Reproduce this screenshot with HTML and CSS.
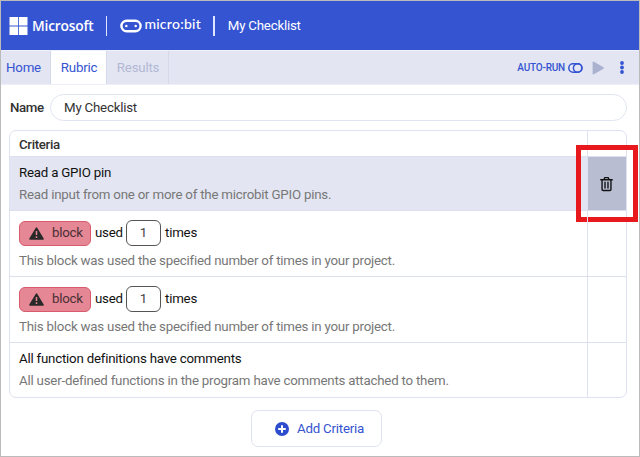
FILE: index.html
```html
<!DOCTYPE html>
<html lang="en">
<head>
<meta charset="utf-8">
<title>My Checklist</title>
<link rel="stylesheet" href="styles.css">
</head>
<body>
<div class="app">
  <header class="header">
    <svg class="windows" viewBox="0 0 18 18"><path fill="#fff" d="M0 0h8.6v8.5H0zM9.4 0H18v8.5H9.4zM0 9.4h8.6V18H0zM9.4 9.4H18V18H9.4z"/></svg>
    <span class="ms">Microsoft</span>
    <i class="bar"></i>
    <svg class="face" viewBox="0 0 22 14"><rect x="1.4" y="1.7" width="19.2" height="10.6" rx="5.3" fill="none" stroke="#fff" stroke-width="2.4"/><circle cx="6.3" cy="7" r="1.25" fill="#fff"/><circle cx="15.7" cy="7" r="1.25" fill="#fff"/></svg>
    <span class="mb">micro:bit</span>
    <i class="bar bar2"></i>
    <span class="title">My Checklist</span>
  </header>
  <nav class="tabs">
    <a class="tab home">Home</a><a class="tab rubric">Rubric</a><a class="tab results">Results</a>
    <div class="tools">
      <span class="auto">AUTO-RUN</span>
      <svg class="toggle" viewBox="0 0 15 10"><rect x=".8" y=".8" width="13.2" height="8.4" rx="4.2" fill="none" stroke="#3454d1" stroke-width="1.5"/><circle cx="9.6" cy="5" r="4.2" fill="none" stroke="#3454d1" stroke-width="1.5"/></svg>
      <svg class="play" viewBox="0 0 12 14"><path d="M1.5 1.5v11l9.5-5.5z" fill="#abb2cf" stroke="#abb2cf" stroke-width="1.8" stroke-linejoin="round"/></svg>
      <svg class="dots" viewBox="0 0 4 13"><g fill="#3454d1"><circle cx="2" cy="2" r="1.9"/><circle cx="2" cy="6.5" r="1.9"/><circle cx="2" cy="11" r="1.9"/></g></svg>
    </div>
  </nav>
  <main>
    <div class="name"><label>Name</label><div class="field">My Checklist</div></div>
    <section class="table">
      <div class="row head"><div class="cell"><b>Criteria</b></div><div class="action"></div></div>
      <div class="row selected">
        <div class="cell"><p class="main">Read a GPIO pin</p><p class="desc">Read input from one or more of the microbit GPIO pins.</p></div>
        <div class="action">
          <svg class="trash" viewBox="0 0 14 16"><path d="M.8 3.4h12.4M4.3 3.2l.9-2.1h3.6l.9 2.1M2.2 3.5v10.3q0 1.2 1.2 1.2h7.2q1.2 0 1.2-1.2V3.5M5.4 6.1v6.2M8.6 6.1v6.2" fill="none" stroke="#111" stroke-width="1.5" stroke-linecap="round" stroke-linejoin="round"/></svg>
          <span class="highlight"></span>
        </div>
      </div>
      <div class="row used">
        <div class="cell"><div class="rule"><span class="block"><svg viewBox="0 0 15 13"><path d="M7.5 1.1 14 12H1z" fill="#292929" stroke="#292929" stroke-width="1.6" stroke-linejoin="round"/><path d="M7.5 4v4M7.5 9.3v1.6" stroke="#e58794" stroke-width="1.5"/></svg>block</span><span class="w">used</span><span class="num">1</span><span>times</span></div><p class="desc">This block was used the specified number of times in your project.</p></div>
        <div class="action"></div>
      </div>
      <div class="row used">
        <div class="cell"><div class="rule"><span class="block"><svg viewBox="0 0 15 13"><path d="M7.5 1.1 14 12H1z" fill="#292929" stroke="#292929" stroke-width="1.6" stroke-linejoin="round"/><path d="M7.5 4v4M7.5 9.3v1.6" stroke="#e58794" stroke-width="1.5"/></svg>block</span><span class="w">used</span><span class="num">1</span><span>times</span></div><p class="desc">This block was used the specified number of times in your project.</p></div>
        <div class="action"></div>
      </div>
      <div class="row last">
        <div class="cell"><p class="main">All function definitions have comments</p><p class="desc">All user-defined functions in the program have comments attached to them.</p></div>
        <div class="action"></div>
      </div>
    </section>
    <button class="add"><svg viewBox="0 0 14 14"><circle cx="7" cy="7" r="7" fill="#2d4dcc"/><path d="M7 3.2v7.6M3.2 7h7.6" stroke="#fff" stroke-width="2"/></svg>Add Criteria</button>
  </main>
</div>
</body>
</html>
```
FILE: styles.css
```css
* { box-sizing: border-box; }
body { margin: 0; font: 13.3px/16px Roboto, sans-serif; letter-spacing: -.22px; color: #111; }
p { margin: 0; }
svg { display: block; flex: none; }
.app { width: 640px; height: 457px; border: 1px solid #bbb; background: #fff; overflow: hidden; }
.header { height: 49px; background: #3454d1; color: #fff; display: flex; align-items: center; padding-left: 8px; white-space: nowrap; }
.windows { width: 19px; height: 18px; }
.ms { font: 600 13.8px/18px "Open Sans", sans-serif; width: 62px; margin-left: 4px; letter-spacing: -.2px; }
.bar { width: 1.4px; height: 20px; background: #dfe5ff; margin-left: 12px; }
.face { width: 22px; height: 14px; margin-left: 13px; }
.mb { font: 500 14px/18px Lato, sans-serif; letter-spacing: .25px; width: 57px; margin: -3px 0 0 2px; }
.bar2 { margin-left: 12px; }
.title { margin-left: 13px; }
.tabs { height: 35px; display: flex; background: #e3e6f2; border-top: 1px solid #eef1fa; border-bottom: 1px solid #eef0f7; color: #3454d1; }
.tab { display: flex; align-items: center; justify-content: center; border-right: 1px solid #d4daea; }
.home { width: 50px; padding-right: 4px; }
.rubric { width: 56px; background: #fff; padding-left: 1px; }
.results { width: 62px; color: #b2b8d4; padding-left: 1px; }
.tools { margin-left: auto; display: flex; align-items: center; padding-right: 15px; }
.auto { font-size: 10px; font-weight: 500; letter-spacing: -.2px; }
.toggle { width: 15px; height: 10px; margin-left: 3px; }
.play { width: 12px; height: 14px; margin-left: 9px; }
.dots { width: 4px; height: 13px; margin-left: 16px; }
main { padding: 9px 12px 0 8px; }
.name { display: flex; align-items: center; height: 27px; }
.name label { width: 41px; padding-left: 1px; font-weight: 500; letter-spacing: -.4px; color: #333; }
.field { flex: 1; height: 27px; border: 1.5px solid #e0e5f1; border-radius: 14px; padding: 5px 13px; color: #333; }
.table { margin-top: 9px; border: 1px solid #dfe2f0; border-radius: 7px; height: 268px; }
.row { display: flex; border-bottom: 1px solid #dcdff0; }
.cell { flex: 1; padding-left: 9px; }
.action { width: 39px; border-left: 1px solid #dfe2f0; position: relative; display: flex; align-items: center; justify-content: center; }
.head { height: 26px; }
.head b { font-weight: 500; line-height: 27px; letter-spacing: -.35px; color: #333; }
.selected { height: 54px; background: #e3e6f2; }
.selected .action { background: #b8bdd2; }
.main { padding-top: 8px; }
.desc { color: #777; margin-top: 6px; }
.used { height: 66px; }
.rule { height: 26px; margin-top: 9px; display: flex; align-items: center; }
.used .desc { margin-top: 7px; }
.block { width: 72px; height: 25px; border: 1px solid #d95a6c; border-radius: 6px; background: #e58794; display: flex; align-items: center; padding-left: 9px; color: #493036; }
.block svg { width: 15px; height: 13px; margin-right: 8px; }
.w { margin-left: 4px; width: 31px; }
.num { width: 35px; height: 26px; border: 1px solid #555; border-radius: 6px; text-align: center; line-height: 24px; color: #444; margin-right: 4px; }
.last { height: 54px; border: 0; }
.trash { width: 13px; height: 16px; margin-right: 2px; }
.highlight { position: absolute; left: -12px; top: -12px; width: 62px; height: 77px; border: 5px solid #e8191c; }
.add { display: flex; align-items: center; width: 131px; height: 37px; margin: 12px 0 0 242px; border: 1px solid #dfe2f0; border-radius: 7px; background: #fff; color: #3454d1; font: 13.3px/16px Roboto, sans-serif; letter-spacing: -.22px; padding: 0 0 0 23px; }
.add svg { width: 14px; height: 14px; margin-right: 8px; }
```
